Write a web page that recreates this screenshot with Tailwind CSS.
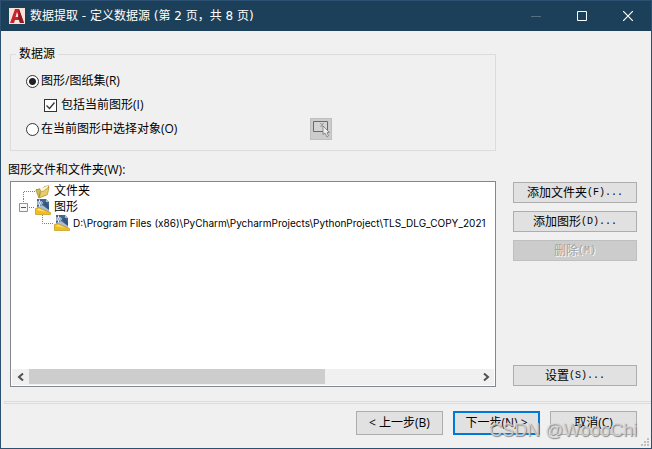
<!DOCTYPE html>
<html lang="zh-CN">
<head>
    <meta charset="UTF-8">
    <meta name="viewport" content="width=device-width, initial-scale=1.0">
    <title>数据提取 - 定义数据源</title>
    <script src="https://cdn.jsdelivr.net/npm/@tailwindcss/browser@4"></script>
</head>
<body class="font-['Open_Sans','Noto_Sans_CJK_SC',sans-serif] text-[12px] leading-4 text-black">
    <!-- Shared icons -->
    <svg class="hidden">
        <symbol id="dwg" viewBox="0 0 16 16">
            <path d="M2 0h9l3 3v10H2z" fill="#44658f"/>
            <path d="M8 4l3-1 3 5v4z" fill="#35557f"/>
            <path d="M2 8l5-2 7 5v2H2z" fill="#a9bfd6"/>
            <path d="M11 0l3 3h-3z" fill="#a9bfd6"/>
            <path d="M.5 15.500V9.500l3.500-1 4 2 7.500 3v2z" fill="#f0bd1c" stroke="#b98a10" stroke-width=".6"/>
            <path d="M1.500 11l2.500-1.500 3.500 1.500 4 2z" fill="#ffe377"/>
            <path d="M4.500.5v7M1 4h7M2.500 2l4 4M6.500 2l-4 4" stroke="#fff" stroke-width=".9"/>
            <path d="M4 3.500h1v1H4z" fill="#3d5f8c"/>
        </symbol>
    </svg>

    <div class="min-h-screen flex flex-col bg-[#f0f0f0] border border-[#2b5072]">
        <!-- Title bar -->
        <header class="h-[30px] flex items-center bg-[#1c4059] text-white pl-2">
            <svg class="w-4 h-4 mr-[5px]" viewBox="0 0 16 16">
                <path d="M0 0h16v16H0z" fill="#f6e3dc"/>
                <path d="M1 15L6 1h4l5 14h-4l-1-3H6l-1 3z" fill="#c5262c"/>
                <path d="M8 4l2 5H6.500z" fill="#f6e3dc"/>
                <path d="M10 1l5 14h-4l-1-3-1-2z" fill="#8f1b22"/>
            </svg>
            <h1 class="flex-1 font-['DejaVu_Sans','Noto_Sans_CJK_SC',sans-serif]">数据提取 - 定义数据源 (第 2 页，共 8 页)</h1>
            <button aria-label="最小化" disabled class="w-[46px] h-full flex items-center justify-center">
                <svg width="10" height="10"><path d="M0 5.500h10" stroke="#56707f"/></svg>
            </button>
            <button aria-label="最大化" class="w-[46px] h-full flex items-center justify-center">
                <svg width="10" height="10"><path d="M.5.5h9v9h-9z" fill="none" stroke="#fff"/></svg>
            </button>
            <button aria-label="关闭" class="w-[46px] h-full flex items-center justify-center">
                <svg width="10" height="10"><path d="M0 0l10 10M10 0L0 10" stroke="#fff" stroke-width="1.200"/></svg>
            </button>
        </header>

        <main class="flex-1 grid grid-cols-[minmax(0,1fr)_124px] grid-rows-[auto_auto_1fr] gap-x-[17px] pt-[15px] pl-[7px] pr-[14px]">
            <!-- Data source -->
            <fieldset class="ml-0.5 border border-[#dcdcdc] px-[15px] pt-2 pb-2.5 flex flex-col gap-0.5">
                <legend class="-ml-2.5 px-[3px]">数据源</legend>
                <label class="h-[22px] flex items-center gap-0.5">
                    <input type="radio" name="source" checked class="appearance-none w-[13px] h-[13px] rounded-full border border-[#333] bg-white checked:bg-[radial-gradient(circle,#222_3px,#fff_4px)]">
                    图形/图纸集(R)
                </label>
                <label class="h-[22px] flex items-center gap-1 pl-[18px]">
                    <span class="grid">
                        <input type="checkbox" checked class="peer appearance-none col-start-1 row-start-1 w-[13px] h-[13px] border border-[#333] bg-white">
                        <svg class="hidden peer-checked:block col-start-1 row-start-1 pointer-events-none" width="13" height="13"><path d="M2.500 6.500l3 3 5-6" fill="none" stroke="#333" stroke-width="1.300"/></svg>
                    </span>
                    包括当前图形(I)
                </label>
                <div class="flex items-center">
                    <label class="w-71 flex items-center gap-0.5">
                        <input type="radio" name="source" class="appearance-none w-[13px] h-[13px] rounded-full border border-[#333] bg-white checked:bg-[radial-gradient(circle,#222_3px,#fff_4px)]">
                        在当前图形中选择对象(O)
                    </label>
                    <button aria-label="选择对象" disabled class="w-[22px] h-[22px] border border-[#bfbfbf] bg-[#ccc]">
                        <svg width="20" height="20">
                            <path d="M2.500 2.500h14v10h-14z" fill="#d4d4d4" stroke="#6a6a6a"/>
                            <path d="M9 4l4 4M13 4l-4 4M11 4v4" stroke="#999" stroke-width=".8"/>
                            <path d="M12 7v8.500l2-1.500 2 4 1.500-1-1.500-3.500h2.500z" fill="#eee" stroke="#777" stroke-width=".8"/>
                        </svg>
                    </button>
                </div>
            </fieldset>

            <h2 id="files-label" class="col-start-1 mt-2.5 mb-0.5 leading-[18px]">图形文件和文件夹(W):</h2>

            <!-- File tree -->
            <div class="col-start-1 ml-0.5 flex flex-col border border-[#828790] bg-white p-px">
                <ul role="tree" aria-labelledby="files-label" class="flex-1 overflow-hidden whitespace-nowrap">
                    <li role="treeitem" class="h-4 flex items-center pl-[7px]">
                        <svg class="shrink-0" width="16" height="16"><path d="M4.500 16V8.500H16" fill="none" stroke="#808080" stroke-dasharray="1 1"/></svg>
                        <svg class="shrink-0 mr-[3px]" width="16" height="16">
                            <path d="M.8 6.500l4-1 1 1L9 3.500l4.500-1.500.5 2-2 8-8 3z" fill="#b8952e"/>
                            <path d="M5 6l8-3.500-.5 8-7 3z" fill="#fdf8d8"/>
                            <path d="M.8 7l4-1 .7 1.500L4 15z" fill="#d6bb55" stroke="#94803a" stroke-width=".6"/>
                            <path d="M4 15l2-6.500 2.500-.5L14 4l-1.500 7.500z" fill="#e9cf68" stroke="#a08a34" stroke-width=".6"/>
                        </svg>
                        文件夹
                    </li>
                    <li role="treeitem" aria-expanded="true">
                        <div class="h-4 flex items-center pl-[7px]">
                            <svg class="shrink-0" width="16" height="16">
                                <path d="M4.500 0v4M10 8.500h6" stroke="#808080" stroke-dasharray="1 1"/>
                                <path d="M.5 4.500h8v8h-8z" fill="#f7f7f7" stroke="#919191"/>
                                <path d="M2 8.500h5" stroke="#3b52a5"/>
                            </svg>
                            <svg class="shrink-0 mr-[3px]" width="16" height="16"><use href="#dwg"/></svg>
                            图形
                        </div>
                        <ul role="group">
                            <li role="treeitem" class="h-4 flex items-center pl-[7px]">
                                <svg class="shrink-0" width="35" height="16"><path d="M23.500 0v8.500H35" fill="none" stroke="#808080" stroke-dasharray="1 1"/></svg>
                                <svg class="shrink-0 mr-[3px]" width="16" height="16"><use href="#dwg"/></svg>
                                <span class="font-['Inter',sans-serif] text-[10px]">D:\Program Files (x86)\PyCharm\PycharmProjects\PythonProject\TLS_DLG_COPY_2021</span>
                            </li>
                        </ul>
                    </li>
                </ul>
                <!-- Horizontal scroll bar -->
                <div class="h-4 flex bg-[#f0f0f0]">
                    <button aria-label="向左滚动" class="w-[17px] flex items-center justify-center">
                        <svg width="8" height="8"><path d="M6 .5L2 4l4 3.500" fill="none" stroke="#505050" stroke-width="2"/></svg>
                    </button>
                    <div class="flex-1">
                        <div class="w-[66%] h-[15px] bg-[#cdcdcd]"></div>
                    </div>
                    <button aria-label="向右滚动" class="w-[17px] flex items-center justify-center">
                        <svg width="8" height="8"><path d="M2 .5L6 4 2 7.500" fill="none" stroke="#505050" stroke-width="2"/></svg>
                    </button>
                </div>
            </div>

            <!-- List actions -->
            <div class="flex flex-col gap-2 py-px">
                <button class="h-[21px] flex items-center justify-center border border-[#adadad] bg-[#e1e1e1]">添加文件夹<span class="font-['Liberation_Mono',monospace] text-[10px]">(F)...</span></button>
                <button class="h-[21px] flex items-center justify-center border border-[#adadad] bg-[#e1e1e1]">添加图形<span class="font-['Liberation_Mono',monospace] text-[10px]">(D)...</span></button>
                <button disabled class="h-[21px] flex items-center justify-center border border-[#bfbfbf] bg-[#ccc] text-[#a0a0a0] [text-shadow:1px_1px_0_#fff]">删除<span class="font-['Liberation_Mono',monospace] text-[10px]">(M)</span></button>
                <button class="mt-auto h-[21px] flex items-center justify-center border border-[#adadad] bg-[#e1e1e1]">设置<span class="font-['Liberation_Mono',monospace] text-[10px]">(S)...</span></button>
            </div>
        </main>

        <div class="mt-[14px] ml-[3px] h-[3px] border-y border-l border-[#dcdcdc]"></div>

        <!-- Wizard buttons -->
        <footer class="relative flex justify-end gap-2.5 pt-[7px] pb-[13px] pr-[14px]">
            <button class="w-[87px] h-6 border border-[#adadad] bg-[#e1e1e1]">&lt; 上一步(B)</button>
            <button class="w-[87px] h-6 border-2 border-[#0078d7] bg-[#e1e1e1]">下一步(N) &gt;</button>
            <button class="w-[87px] h-6 border border-[#adadad] bg-[#e1e1e1]">取消(C)</button>
            <span class="absolute right-3.5 bottom-1.5 font-['Liberation_Sans',sans-serif] text-[18px] leading-6 text-[#d8d8d8]/80 [text-shadow:1px_1px_1px_#888] pointer-events-none">CSDN @WoooChi</span>
            <svg class="absolute right-0.5 bottom-0.5" width="8" height="8">
                <path d="M6 0h2v2H6zM3 3h2v2H3zM6 3h2v2H6zM0 6h2v2H0zM3 6h2v2H3zM6 6h2v2H6z" fill="#bfbfbf"/>
            </svg>
        </footer>
    </div>
</body>
</html>
